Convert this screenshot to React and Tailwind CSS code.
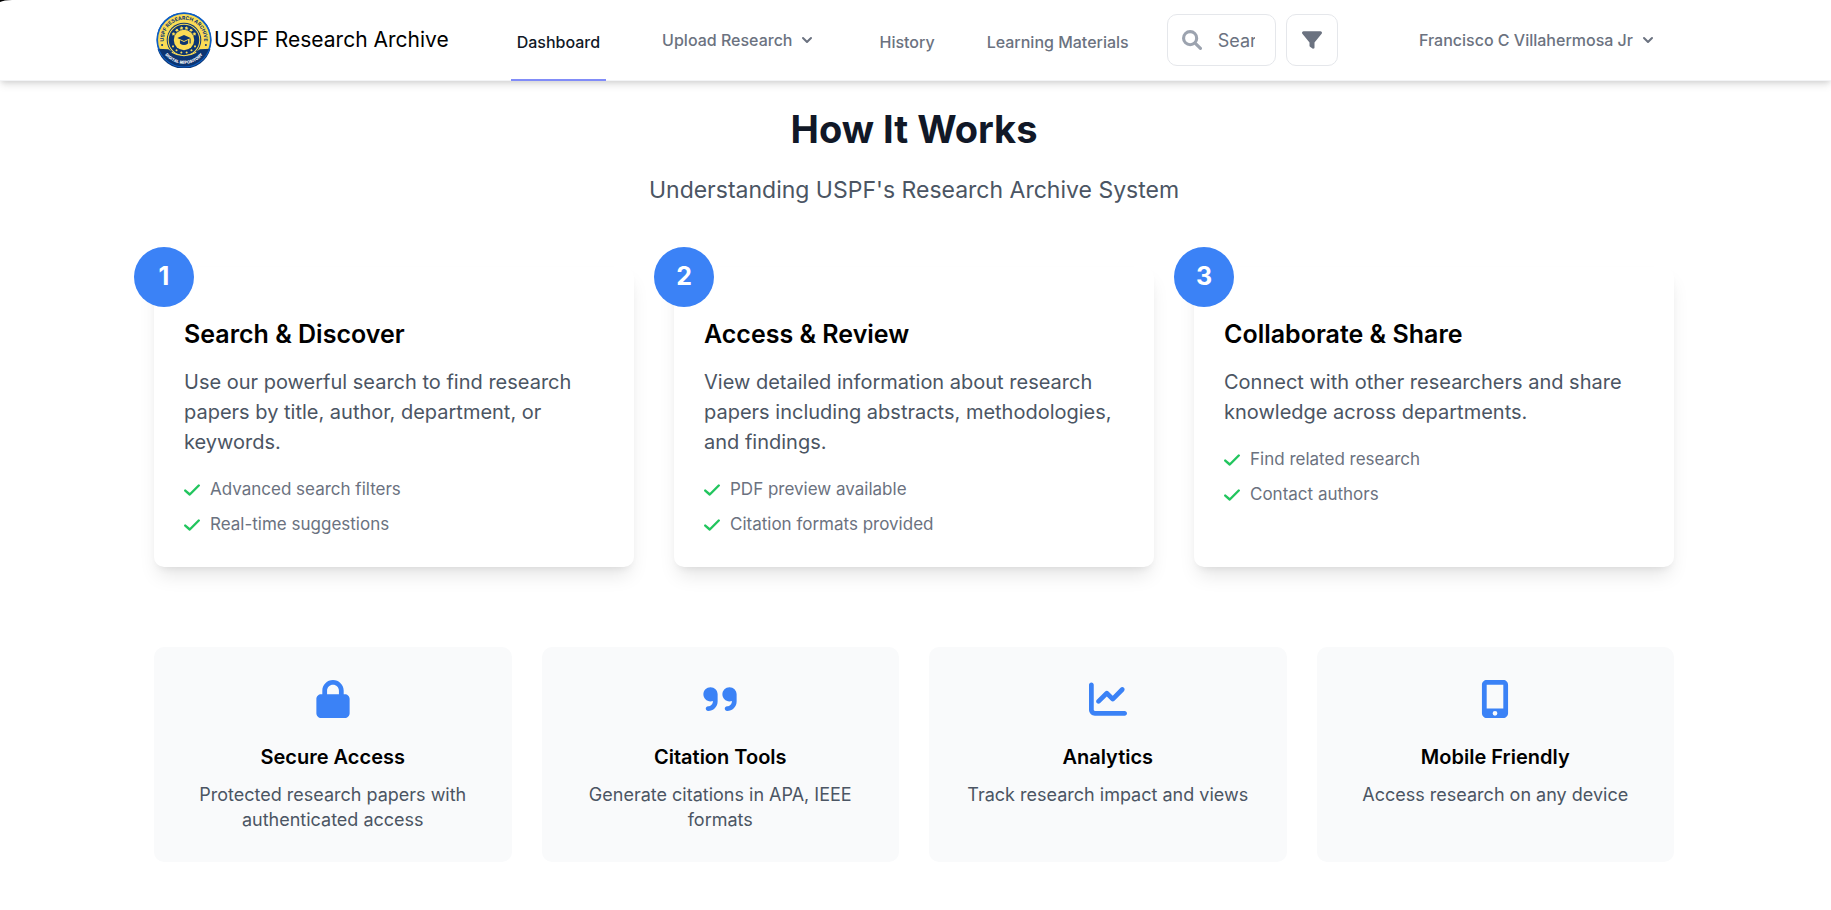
import React from "react";
import {
  FaChartLine,
  FaFilter,
  FaLock,
  FaMobileScreenButton,
} from "react-icons/fa6";

const steps = [
  {
    title: "Search & Discover",
    text: "Use our powerful search to find research papers by title, author, department, or keywords.",
    points: ["Advanced search filters", "Real-time suggestions"],
  },
  {
    title: "Access & Review",
    text: "View detailed information about research papers including abstracts, methodologies, and findings.",
    points: ["PDF preview available", "Citation formats provided"],
  },
  {
    title: "Collaborate & Share",
    text: "Connect with other researchers and share knowledge across departments.",
    points: ["Find related research", "Contact authors"],
  },
];

const features = [
  { title: "Secure Access", text: "Protected research papers with authenticated access", Icon: FaLock },
  { title: "Citation Tools", text: "Generate citations in APA, IEEE formats", Icon: QuoteIcon },
  { title: "Analytics", text: "Track research impact and views", Icon: FaChartLine },
  { title: "Mobile Friendly", text: "Access research on any device", Icon: FaMobileScreenButton },
];

function QuoteIcon({ className }) {
  return (
    <svg viewBox="0 0 448 512" fill="currentColor" className={className} aria-hidden="true">
      <path d="M96 96C43 96 0 138.100 0 192s43 96 96 96c11.280 0 21.950-2.305 32-5.879V288c0 35.300-28.720 64-64 64-17.670 0-32 14.330-32 32s14.330 32 32 32c70.580 0 128-57.420 128-128V192C192 138.100 149 96 96 96z" />
      <path d="M448 192c0-53.020-42.980-96-96-96s-96 42.980-96 96 42.980 96 96 96c11.280 0 21.950-2.305 32-5.879V288c0 35.300-28.720 64-64 64-17.670 0-32 14.330-32 32s14.330 32 32 32c70.580 0 128-57.420 128-128V192z" />
    </svg>
  );
}

function CheckIcon({ className }) {
  return (
    <svg viewBox="0 0 448 512" fill="none" className={className} aria-hidden="true">
      <path d="M32 272L160 384L416 128" stroke="currentColor" strokeWidth="68" strokeLinecap="round" strokeLinejoin="round" />
    </svg>
  );
}

function SearchIcon({ className }) {
  return (
    <svg viewBox="0 0 512 512" fill="none" className={className} aria-hidden="true">
      <circle cx="208" cy="208" r="168" stroke="currentColor" strokeWidth="80" />
      <path d="M335 335L472 472" stroke="currentColor" strokeWidth="80" strokeLinecap="round" />
    </svg>
  );
}

function Chevron() {
  return (
    <svg viewBox="0 0 20 20" fill="currentColor" className="size-5" aria-hidden="true">
      <path
        fillRule="evenodd"
        clipRule="evenodd"
        d="M5.293 7.293a1 1 0 011.414 0L10 10.586l3.293-3.293a1 1 0 111.414 1.414l-4 4a1 1 0 01-1.414 0l-4-4a1 1 0 010-1.414z"
      />
    </svg>
  );
}

function Seal() {
  const stars = [-60, -36, -12, 12, 36, 60];
  return (
    <svg viewBox="0 0 110 110" className="size-14 shrink-0" aria-hidden="true">
      <defs>
        <path id="seal-top" d="M 17.500 67 A 39.500 39.500 0 1 1 92.500 67" />
        <path id="seal-bottom" d="M 19 85 A 47 47 0 0 0 91 85" />
      </defs>
      <circle cx="55" cy="55" r="54" fill="#0f5fc4" />
      <circle cx="55" cy="55" r="51" fill="#fbdc55" />
      <circle cx="55" cy="55" r="34" fill="#0c3572" />
      <circle cx="55" cy="55" r="31" fill="none" stroke="#fbdc55" strokeWidth="2" />
      <circle cx="55" cy="55" r="20" fill="#fbdc55" />
      {stars.map((a) => (
        <g key={a} transform={`rotate(${a} 55 55)`}>
          <path d="M55 27l1.2 2.8 3 .2-2.3 2 .8 3-2.7-1.700-2.700 1.700.8-3-2.300-2 3-.2z" fill="#fbdc55" />
          <circle cx="55" cy="80" r="2" fill="#fbdc55" />
        </g>
      ))}
      <path d="M3 72 L24 73 Q55 98 86 73 L107 72 A54 54 0 0 1 3 72z" fill="#0c3572" />
      <path d="M31 79 Q55 93 79 79" fill="none" stroke="#fbdc55" strokeWidth="2" />
      <path d="M55 45l13 6-13 6-13-6z M47 55v7q8 6 16 0v-7l-8 4z M66 52h2v10h-2z" fill="#0c3572" />
      <circle cx="12" cy="65" r="2" fill="#0c3572" />
      <circle cx="98" cy="65" r="2" fill="#0c3572" />
      <circle cx="55" cy="55" r="53" fill="none" stroke="#0f5fc4" strokeWidth="2" />
      <text fontFamily="Inter, sans-serif" fontSize="10" fontWeight="700" fill="#0c3572" textAnchor="middle">
        <textPath href="#seal-top" startOffset="50%">USPF RESEARCH ARCHIVE</textPath>
      </text>
      <text fontFamily="Inter, sans-serif" fontSize="8" fontWeight="800" fill="#ffffff" textAnchor="middle">
        <textPath href="#seal-bottom" startOffset="50%">DIGITAL REPOSITORY</textPath>
      </text>
    </svg>
  );
}

function Nav() {
  const link = "-mb-px flex items-center border-b-2 px-1.5 pt-1";
  const menu = "flex items-center gap-[5px] self-center px-4 py-2";
  return (
    <nav className="border-b border-[#f3f4f6] bg-white pr-[3px] shadow-[0_5px_8px_-1px_rgba(0,0,0,0.1),0_2px_5px_-1px_rgba(0,0,0,0.1)]">
      <div className="mx-auto flex h-20 max-w-[1520px] items-stretch justify-between text-base font-medium text-[#6b7280]">
        <div className="flex">
          <a href="#home" className="flex items-center gap-0.5 pl-0.5 text-[21px] font-normal text-black">
            <Seal />
            USPF Research Archive
          </a>
          <div className="ml-[62px] flex">
            <a href="#dashboard" className={`${link} border-[#818cf8] text-[#111827]`}>Dashboard</a>
            <button type="button" className={`${menu} ml-10`}>
              Upload Research
              <Chevron />
            </button>
            <a href="#history" className={`${link} ml-10 border-transparent`}>History</a>
            <a href="#materials" className={`${link} ml-10 border-transparent`}>Learning Materials</a>
          </div>
          <form className="ml-8 flex items-center gap-2.5">
            <label className="flex h-[52px] w-[109px] items-center gap-4 rounded-[10px] border border-[#e5e7eb] pr-5 pl-[14px]">
              <SearchIcon className="size-5 shrink-0 text-[#9ca3af]" />
              <input
                type="text"
                aria-label="Search"
                placeholder="Search research"
                className="w-full min-w-0 text-[18px] font-normal outline-none placeholder:text-[#6b7280]"
              />
            </label>
            <button
              type="button"
              aria-label="Filter"
              className="flex size-[52px] items-center justify-center rounded-[10px] border border-[#e5e7eb]"
            >
              <FaFilter className="size-5" />
            </button>
          </form>
        </div>
        <button type="button" className={menu}>
          Francisco C Villahermosa Jr
          <Chevron />
        </button>
      </div>
    </nav>
  );
}

export default function App() {
  return (
    <div className="relative min-h-screen bg-white font-[Inter,sans-serif]">
      <Nav />
      <svg className="absolute top-0 left-0 h-[2px] w-3" viewBox="0 0 12 2" aria-hidden="true">
        <path d="M0 0H12Q4 0 0 2z" fill="#000" />
      </svg>
      <main className="pt-6 pr-[3px] pb-12">
        <div className="mx-auto max-w-[1520px]">
          <header className="text-center">
            <h1 className="text-[38px] leading-[48px] font-bold text-[#111827]">How It Works</h1>
            <p className="mt-[22px] text-[23px] leading-[30px] text-[#4b5563]">
              Understanding USPF's Research Archive System
            </p>
          </header>

          <section className="mt-[62px] grid grid-cols-3 gap-10">
            {steps.map((step, i) => (
              <article
                key={step.title}
                className="relative rounded-[10px] bg-white p-[30px] shadow-[0_12px_19px_-4px_rgba(0,0,0,0.1),0_5px_8px_-5px_rgba(0,0,0,0.1)]"
              >
                <span className="absolute -top-5 -left-5 flex size-[60px] items-center justify-center rounded-full bg-[#3b82f6] text-[25px] font-bold text-white">
                  {i + 1}
                </span>
                <h2 className="mt-5 text-[25px] leading-[35px] font-semibold text-black">{step.title}</h2>
                <p className="mt-[15px] text-[20px] leading-[30px] text-[#4b5563]">{step.text}</p>
                <ul className="mt-5 flex flex-col gap-2.5 text-[17px] leading-[25px] text-[#6b7280]">
                  {step.points.map((point) => (
                    <li key={point} className="flex items-center gap-2.5">
                      <CheckIcon className="h-[18px] w-4 text-[#22c55e]" />
                      {point}
                    </li>
                  ))}
                </ul>
              </article>
            ))}
          </section>

          <section className="mt-20 grid grid-cols-4 gap-[30px]">
            {features.map(({ title, text, Icon }) => (
              <article key={title} className="rounded-[10px] bg-[#f9fafb] p-[30px] text-center">
                <div className="flex h-[45px] items-center justify-center pb-0.5 text-[#3b82f6]">
                  <Icon className="size-[38px]" />
                </div>
                <h3 className="mt-5 text-[20px] leading-[30px] font-semibold text-black">{title}</h3>
                <p className="mt-2.5 text-[18px] leading-[25px] text-[#4b5563]">{text}</p>
              </article>
            ))}
          </section>
        </div>
      </main>
    </div>
  );
}
